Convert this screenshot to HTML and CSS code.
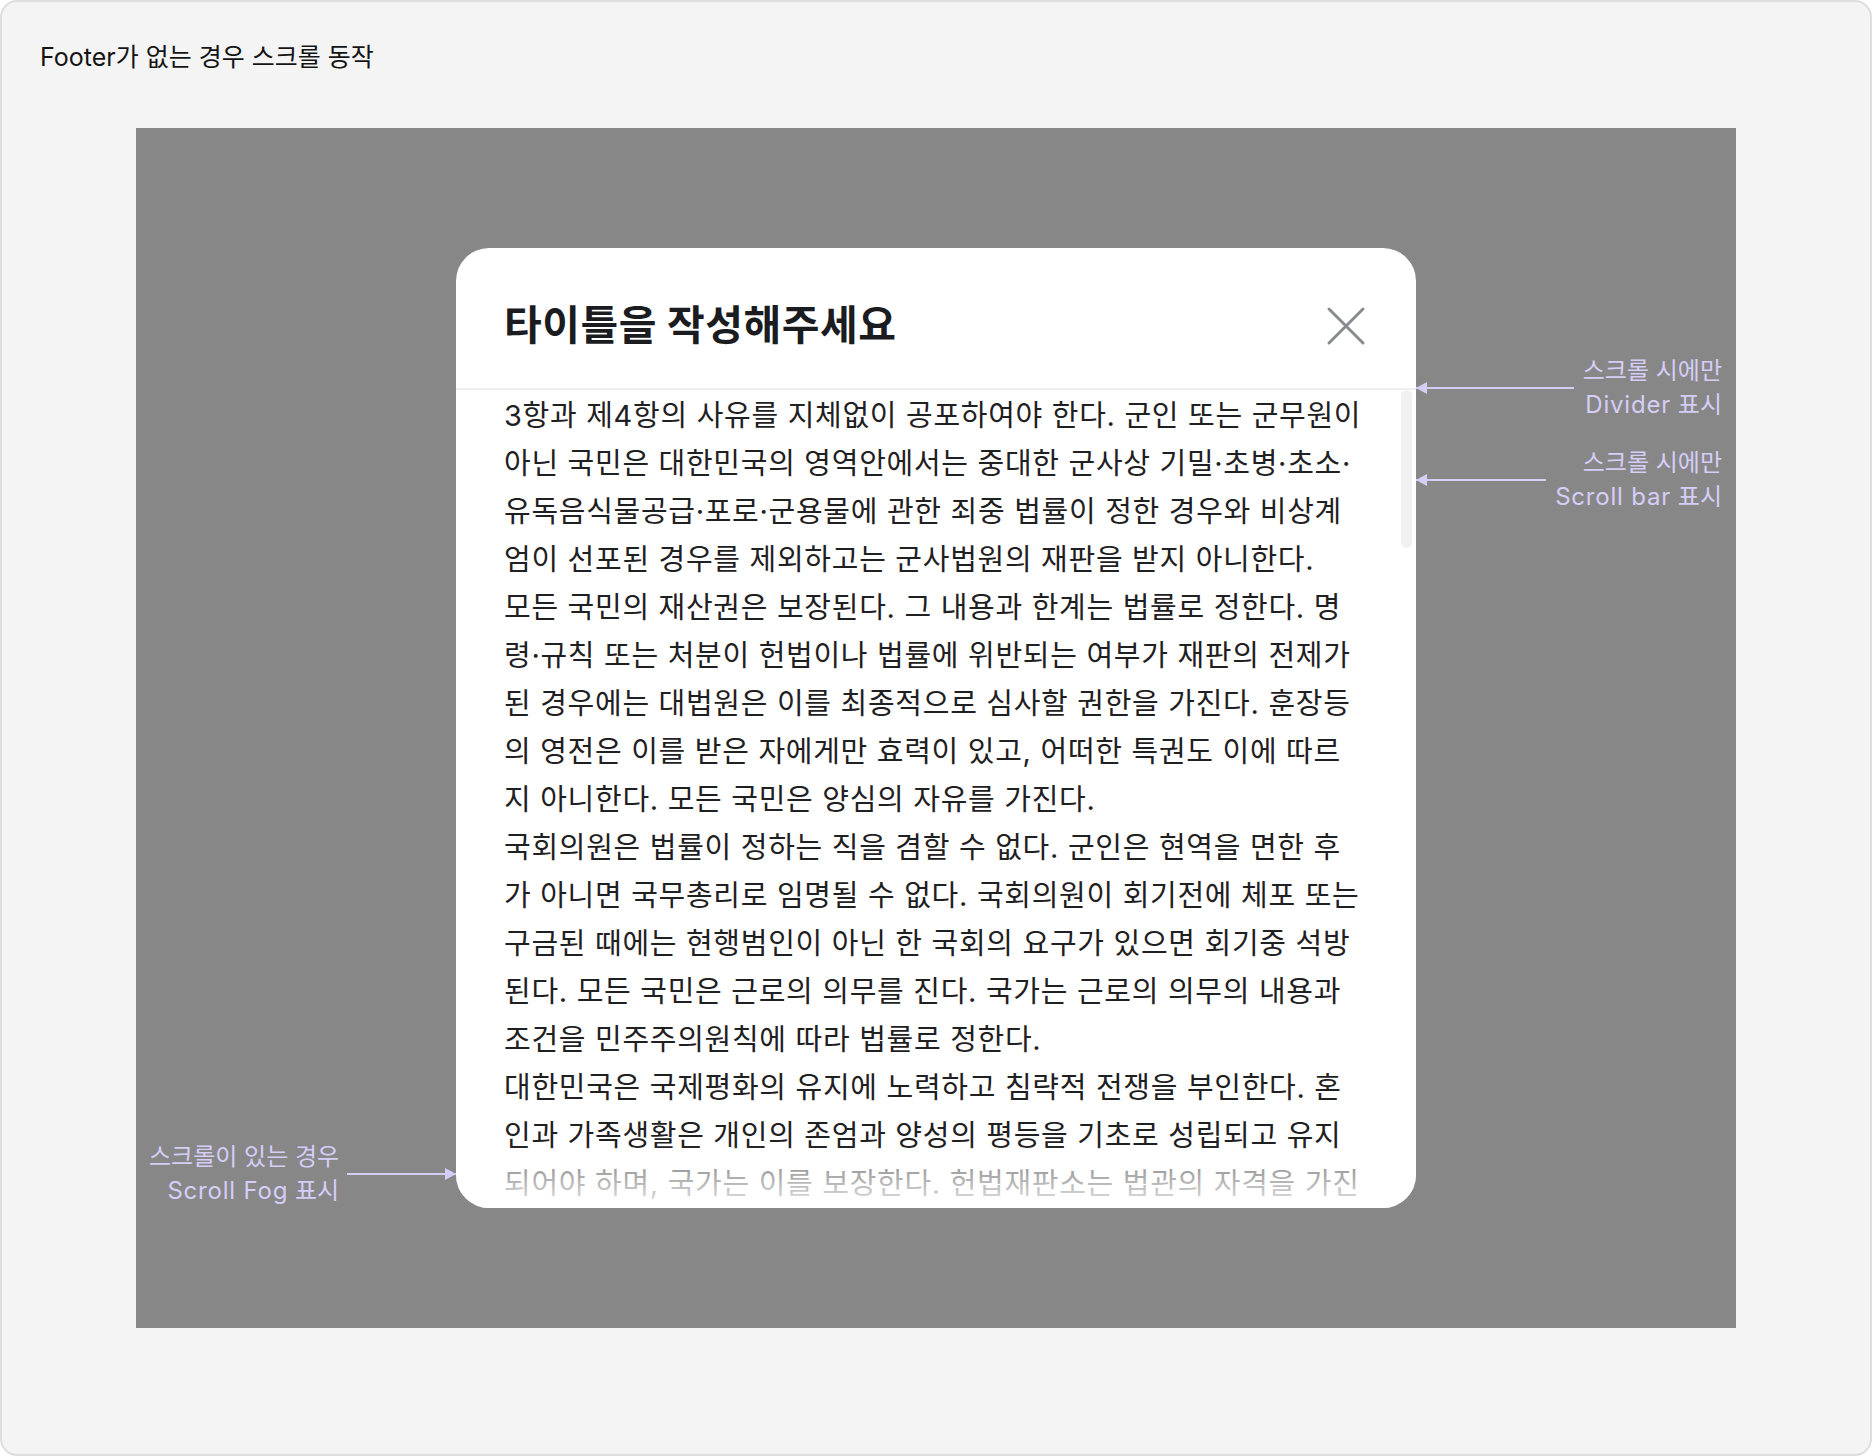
FILE: index.html
```html
<!DOCTYPE html>
<html lang="ko">
<head>
<meta charset="utf-8">
<title>Footer가 없는 경우 스크롤 동작</title>
<link rel="stylesheet" href="styles.css">
</head>
<body>
<div class="frame">
  <h1 class="frame-title">Footer가 없는 경우 스크롤 동작</h1>
  <div class="canvas">
    <div class="modal">
      <div class="modal-header">
        <h2 class="modal-title">타이틀을 작성해주세요</h2>
        <button class="close-btn" type="button" aria-label="닫기">
          <svg width="44" height="44" viewBox="0 0 44 44" fill="none">
            <path d="M5 5 L39 39 M39 5 L5 39" stroke="#878b90" stroke-width="3" stroke-linecap="round"/>
          </svg>
        </button>
      </div>
      <div class="divider"></div>
      <div class="modal-body">
        <div class="body-text">
          <p class="para">
            <span class="line">3항과 제4항의 사유를 지체없이 공포하여야 한다. 군인 또는 군무원이</span>
            <span class="line">아닌 국민은 대한민국의 영역안에서는 중대한 군사상 기밀·초병·초소·</span>
            <span class="line">유독음식물공급·포로·군용물에 관한 죄중 법률이 정한 경우와 비상계</span>
            <span class="line">엄이 선포된 경우를 제외하고는 군사법원의 재판을 받지 아니한다.</span>
          </p>
          <p class="para">
            <span class="line">모든 국민의 재산권은 보장된다. 그 내용과 한계는 법률로 정한다. 명</span>
            <span class="line">령·규칙 또는 처분이 헌법이나 법률에 위반되는 여부가 재판의 전제가</span>
            <span class="line">된 경우에는 대법원은 이를 최종적으로 심사할 권한을 가진다. 훈장등</span>
            <span class="line">의 영전은 이를 받은 자에게만 효력이 있고, 어떠한 특권도 이에 따르</span>
            <span class="line">지 아니한다. 모든 국민은 양심의 자유를 가진다.</span>
          </p>
          <p class="para">
            <span class="line">국회의원은 법률이 정하는 직을 겸할 수 없다. 군인은 현역을 면한 후</span>
            <span class="line">가 아니면 국무총리로 임명될 수 없다. 국회의원이 회기전에 체포 또는</span>
            <span class="line">구금된 때에는 현행범인이 아닌 한 국회의 요구가 있으면 회기중 석방</span>
            <span class="line">된다. 모든 국민은 근로의 의무를 진다. 국가는 근로의 의무의 내용과</span>
            <span class="line">조건을 민주주의원칙에 따라 법률로 정한다.</span>
          </p>
          <p class="para">
            <span class="line">대한민국은 국제평화의 유지에 노력하고 침략적 전쟁을 부인한다. 혼</span>
            <span class="line">인과 가족생활은 개인의 존엄과 양성의 평등을 기초로 성립되고 유지</span>
            <span class="line">되어야 하며, 국가는 이를 보장한다. 헌법재판소는 법관의 자격을 가진</span>
          </p>
        </div>
        <div class="scroll-thumb"></div>
        <div class="scroll-fog"></div>
      </div>
    </div>

    <div class="note note-divider">
      <span class="note-arrow note-arrow-left"></span>
      <span class="note-text">스크롤 시에만<br><span class="latin">Divider</span> 표시</span>
    </div>
    <div class="note note-scrollbar">
      <span class="note-arrow note-arrow-left"></span>
      <span class="note-text">스크롤 시에만<br><span class="latin">Scroll bar</span> 표시</span>
    </div>
    <div class="note note-fog">
      <span class="note-text">스크롤이 있는 경우<br><span class="latin">Scroll Fog</span> 표시</span>
      <span class="note-arrow note-arrow-right"></span>
    </div>
  </div>
</div>
</body>
</html>
```

FILE: styles.css
```css
* {
  box-sizing: border-box;
}

html, body {
  margin: 0;
  padding: 0;
  background: #ffffff;
}

body {
  font-family: Inter, "Noto Sans CJK KR", "Noto Sans", sans-serif;
  color: #1c1c1e;
}

.frame {
  width: 1872px;
  height: 1456px;
  border: 2px solid #dedede;
  border-radius: 17px;
  background: #f4f4f4;
  padding: 38px 0 0 38px;
  overflow: hidden;
}

.frame-title {
  margin: 0;
  font-size: 25px;
  line-height: 34px;
  font-weight: 400;
  color: #141414;
  letter-spacing: 0;
}

.canvas {
  position: relative;
  width: 1600px;
  height: 1200px;
  margin: 54px 0 0 96px;
  background: #878787;
  display: flex;
  align-items: center;
  justify-content: center;
}

.modal {
  width: 960px;
  height: 960px;
  background: #ffffff;
  border-radius: 33px;
  overflow: hidden;
  display: flex;
  flex-direction: column;
}

.modal-header {
  height: 140px;
  flex: 0 0 140px;
  padding: 48px 48px 0 48px;
  display: flex;
  align-items: flex-start;
  justify-content: space-between;
}

.modal-title {
  margin: 0;
  font-size: 41px;
  line-height: 58px;
  font-weight: 700;
  color: #1b1c1f;
  letter-spacing: 0.5px;
}

.close-btn {
  width: 44px;
  height: 44px;
  padding: 0;
  margin-top: 8px;
  border: 0;
  background: transparent;
  display: block;
}

.close-btn svg {
  display: block;
}

.divider {
  flex: 0 0 2px;
  height: 2px;
  background: #efefef;
}

.modal-body {
  position: relative;
  flex: 1 1 auto;
  overflow: hidden;
}

.body-text {
  padding: 2px 48px 0 48px;
  font-size: 29px;
  line-height: 48px;
  letter-spacing: 0.7px;
  color: #1f2022;
}

.para {
  margin: 0;
}

.line {
  display: block;
  white-space: nowrap;
}

.scroll-thumb {
  position: absolute;
  top: 0;
  right: 4px;
  width: 11px;
  height: 158px;
  border-radius: 6px;
  background: #f1f1f1;
}

.scroll-fog {
  position: absolute;
  left: 0;
  right: 0;
  bottom: 0;
  height: 62px;
  background: linear-gradient(to bottom,
    rgba(255, 255, 255, 0) 0%,
    rgba(255, 255, 255, 0.55) 35%,
    rgba(255, 255, 255, 0.9) 100%);
}

/* annotations */
.note {
  position: absolute;
  display: flex;
  align-items: center;
  color: #d6cdf7;
  font-size: 24px;
  line-height: 34px;
}

.note-text {
  white-space: nowrap;
  text-align: right;
}

.latin {
  letter-spacing: 0.8px;
}

.note-divider {
  left: 1280px;
  right: 14px;
  top: 226px;
  gap: 9px;
}

.note-scrollbar {
  left: 1280px;
  right: 14px;
  top: 318px;
  gap: 9px;
}

.note-fog {
  left: 13px;
  width: 307px;
  top: 1012px;
  gap: 8px;
}

.note-arrow {
  position: relative;
  flex: 1 1 auto;
  height: 2px;
  background: #d6cdf7;
}

.note-arrow::before {
  content: "";
  position: absolute;
  top: -5px;
  width: 0;
  height: 0;
  border-top: 6px solid transparent;
  border-bottom: 6px solid transparent;
}

.note-arrow-left::before {
  left: 0;
  border-right: 11px solid #d6cdf7;
}

.note-arrow-right::before {
  right: 0;
  border-left: 11px solid #d6cdf7;
}
```
